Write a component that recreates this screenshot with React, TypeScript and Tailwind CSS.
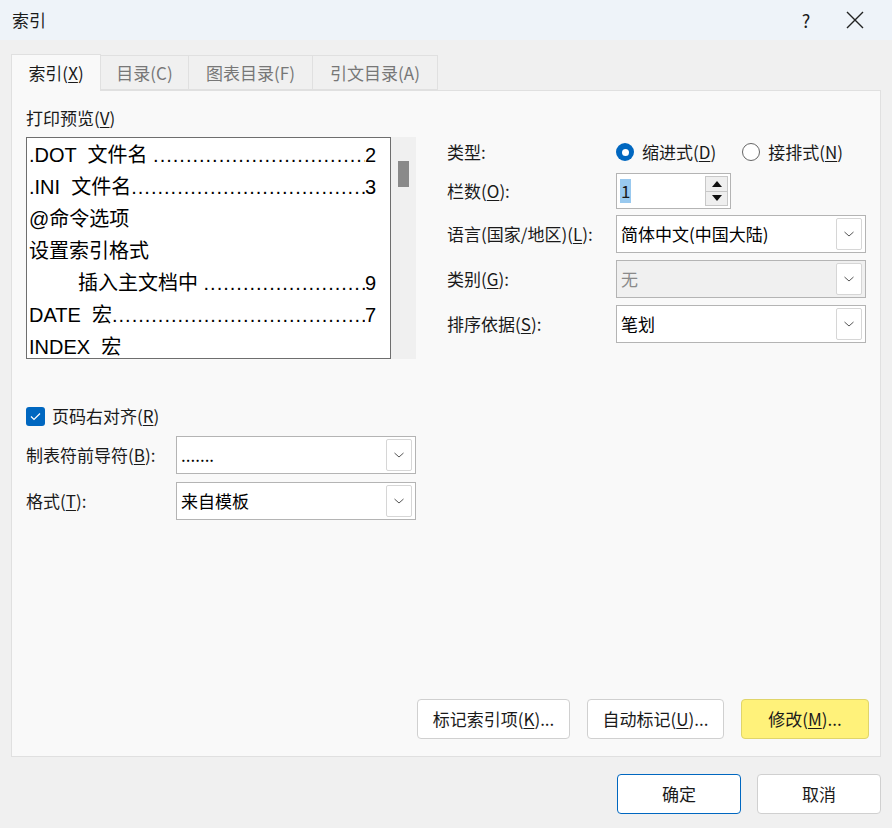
import React from "react";

const font = { fontFamily: '"Noto Sans CJK SC", "Noto Sans", sans-serif' };

function Chevron() {
  return (
    <div className="w-[26px] h-[32px] mr-[3px] border border-[#d6d6d6] bg-white rounded-[2px] flex items-center justify-center">
      <svg width="12" height="8" viewBox="0 0 12 8"><path d="M1.5 2 L6 6 L10.5 2" fill="none" stroke="#555" strokeWidth="1" /></svg>
    </div>
  );
}

function Select({ value, w, disabled }: { value: string; w: string; disabled?: boolean }) {
  return (
    <div className={`${w} h-[38px] border border-[#b4b4b4] flex items-center justify-between pl-[4px] ${disabled ? "bg-[#f0f0f0] text-[#8a8a8a]" : "bg-white text-black"}`}>
      <span className="text-[17px]">{value}</span>
      <Chevron />
    </div>
  );
}

function U({ c }: { c: string }) {
  return <span className="underline underline-offset-2">{c}</span>;
}

function Btn({ children, w, cls = "" }: { children: React.ReactNode; w: string; cls?: string }) {
  return (
    <div className={`${w} h-[40px] rounded-[4px] border flex items-center justify-center text-[17px] ${cls}`}>{children}</div>
  );
}

const lines: [string, string | null, boolean?][] = [
  [".DOT  文件名 ", "2"],
  [".INI  文件名", "3"],
  ["@命令选项", null],
  ["设置索引格式", null],
  ["插入主文档中 ", "9", true],
  ["DATE  宏", "7"],
  ["INDEX  宏", null],
];

export default function App() {
  return (
    <div style={font} className="w-[892px] h-[828px] bg-[#f0f0f0] text-[#1a1a1a] overflow-hidden flex flex-col">
      <div className="h-[40px] bg-[#eef3f9] flex items-center justify-between pl-[12px]">
        <span className="text-[17px]">索引</span>
        <div className="flex items-center">
          <span className="text-[18px] w-[40px] text-center">?</span>
          <svg width="60" height="20" viewBox="0 0 60 20" className="mr-[6px]"><path d="M21 2 L37 18 M37 2 L21 18" stroke="#222" strokeWidth="1.4" /></svg>
        </div>
      </div>
      <div className="px-[11px] pt-[13px]">
        <div className="flex items-end h-[37px] text-[17px]">
          <div className="w-[90px] h-[37px] bg-[#f9f9f9] border border-b-0 border-[#e0e0e0] flex items-center justify-center relative z-10 -mb-px">索引(<U c="X" />)</div>
          <div className="w-[88px] h-[35px] border border-[#e0e0e0] border-l-0 bg-[#f0f0f0] text-[#777] flex items-center justify-center">目录(C)</div>
          <div className="w-[124px] h-[35px] border border-[#e0e0e0] border-l-0 bg-[#f0f0f0] text-[#777] flex items-center justify-center">图表目录(F)</div>
          <div className="w-[125px] h-[35px] border border-[#e0e0e0] border-l-0 bg-[#f0f0f0] text-[#777] flex items-center justify-center">引文目录(A)</div>
        </div>
        <div className="h-[667px] bg-[#f9f9f9] border border-[#e0e0e0] w-[870px] flex flex-col px-[14px] pt-[16px] text-[17px]">
          <div className="flex">
            <div className="w-[422px]">
              <div className="leading-[22px]">打印预览(<U c="V" />)</div>
              <div className="flex mt-[8px]">
                <div className="w-[365px] h-[222px] bg-white border border-[#6e6e6e] overflow-hidden pl-[2px] pr-[14px] pt-[1px] text-[20px] text-black" style={{ fontFamily: '"Liberation Sans", "Noto Sans CJK SC", sans-serif' }}>
                  {lines.map(([t, n, ind], i) => (
                    <div key={i} className={`flex h-[32px] items-center whitespace-pre ${ind ? "pl-[49px]" : ""}`}>
                      <span className="shrink-0">{t}</span>
                      {n && <span className="flex-1 min-w-0 overflow-hidden whitespace-nowrap tracking-[1px] text-clip">{"........................................................................"}</span>}
                      {n && <span className="shrink-0">{n}</span>}
                    </div>
                  ))}
                </div>
                <div className="w-[25px] h-[222px] bg-[#f0f0f0] flex justify-center pt-[24px]">
                  <div className="w-[11px] h-[26px] bg-[#8a8a8a]"></div>
                </div>
              </div>
            </div>
            <div className="flex-1 flex flex-col pt-[30px]">
              <div className="flex items-center h-[30px]">
                <span className="w-[169px]">类型:</span>
                <div className="w-[18px] h-[18px] rounded-full bg-[#0067c0] flex items-center justify-center"><div className="w-[7px] h-[7px] rounded-full bg-white"></div></div>
                <span className="ml-[8px]">缩进式(<U c="D" />)</span>
                <div className="ml-[26px] w-[18px] h-[18px] rounded-full border border-[#666] bg-white"></div>
                <span className="ml-[8px]">接排式(<U c="N" />)</span>
              </div>
              <div className="flex items-center mt-[6px] h-[36px]">
                <span className="w-[169px]">栏数(<U c="O" />):</span>
                <div className="w-[115px] h-[36px] border border-[#b4b4b4] bg-white flex items-center justify-between pl-[3px] pr-[2px]">
                  <span className="bg-[#99c9ef] leading-[24px] px-[1px]">1</span>
                  <div className="flex flex-col w-[23px] h-[30px] border border-[#c8c8c8]">
                    <div className="flex-1 bg-[#efefef] border-b border-[#c8c8c8] flex items-center justify-center"><svg width="10" height="6"><path d="M0 6 L5 0 L10 6Z" fill="#111" /></svg></div>
                    <div className="flex-1 bg-[#efefef] flex items-center justify-center"><svg width="10" height="6"><path d="M0 0 L5 6 L10 0Z" fill="#111" /></svg></div>
                  </div>
                </div>
              </div>
              <div className="flex items-center mt-[6px]">
                <span className="w-[169px]">语言(国家/地区)(<U c="L" />):</span>
                <Select value="简体中文(中国大陆)" w="w-[250px]" />
              </div>
              <div className="flex items-center mt-[7px]">
                <span className="w-[169px]">类别(<U c="G" />):</span>
                <Select value="无" w="w-[250px]" disabled />
              </div>
              <div className="flex items-center mt-[7px]">
                <span className="w-[169px]">排序依据(<U c="S" />):</span>
                <Select value="笔划" w="w-[250px]" />
              </div>
            </div>
          </div>
          <div className="flex items-center mt-[46px] h-[22px]">
            <div className="w-[19px] h-[19px] rounded-[3px] bg-[#0067c0] flex items-center justify-center">
              <svg width="11" height="9" viewBox="0 0 11 9"><path d="M1 4.5 L4 7.5 L10 1.5" fill="none" stroke="white" strokeWidth="1.2" /></svg>
            </div>
            <span className="ml-[7px]">页码右对齐(<U c="R" />)</span>
          </div>
          <div className="flex items-center mt-[9px]">
            <span className="w-[150px]">制表符前导符(<U c="B" />):</span>
            <Select value="......." w="w-[240px]" />
          </div>
          <div className="flex items-center mt-[8px]">
            <span className="w-[150px]">格式(<U c="T" />):</span>
            <Select value="来自模板" w="w-[240px]" />
          </div>
          <div className="flex-1"></div>
          <div className="flex justify-end gap-[17px] mb-[17px] -mr-[3px]">
            <Btn w="w-[153px]" cls="bg-white border-[#d0d0d0]">标记索引项(<U c="K" />)...</Btn>
            <Btn w="w-[137px]" cls="bg-white border-[#d0d0d0]">自动标记(<U c="U" />)...</Btn>
            <Btn w="w-[128px]" cls="bg-[#fff27a] border-[#e0d56a]">修改(<U c="M" />)...</Btn>
          </div>
        </div>
      </div>
      <div className="flex justify-end gap-[16px] pr-[11px] mt-[17px]">
        <Btn w="w-[124px]" cls="bg-white border-[#0067c0]">确定</Btn>
        <Btn w="w-[124px]" cls="bg-white border-[#d0d0d0]">取消</Btn>
      </div>
    </div>
  );
}
